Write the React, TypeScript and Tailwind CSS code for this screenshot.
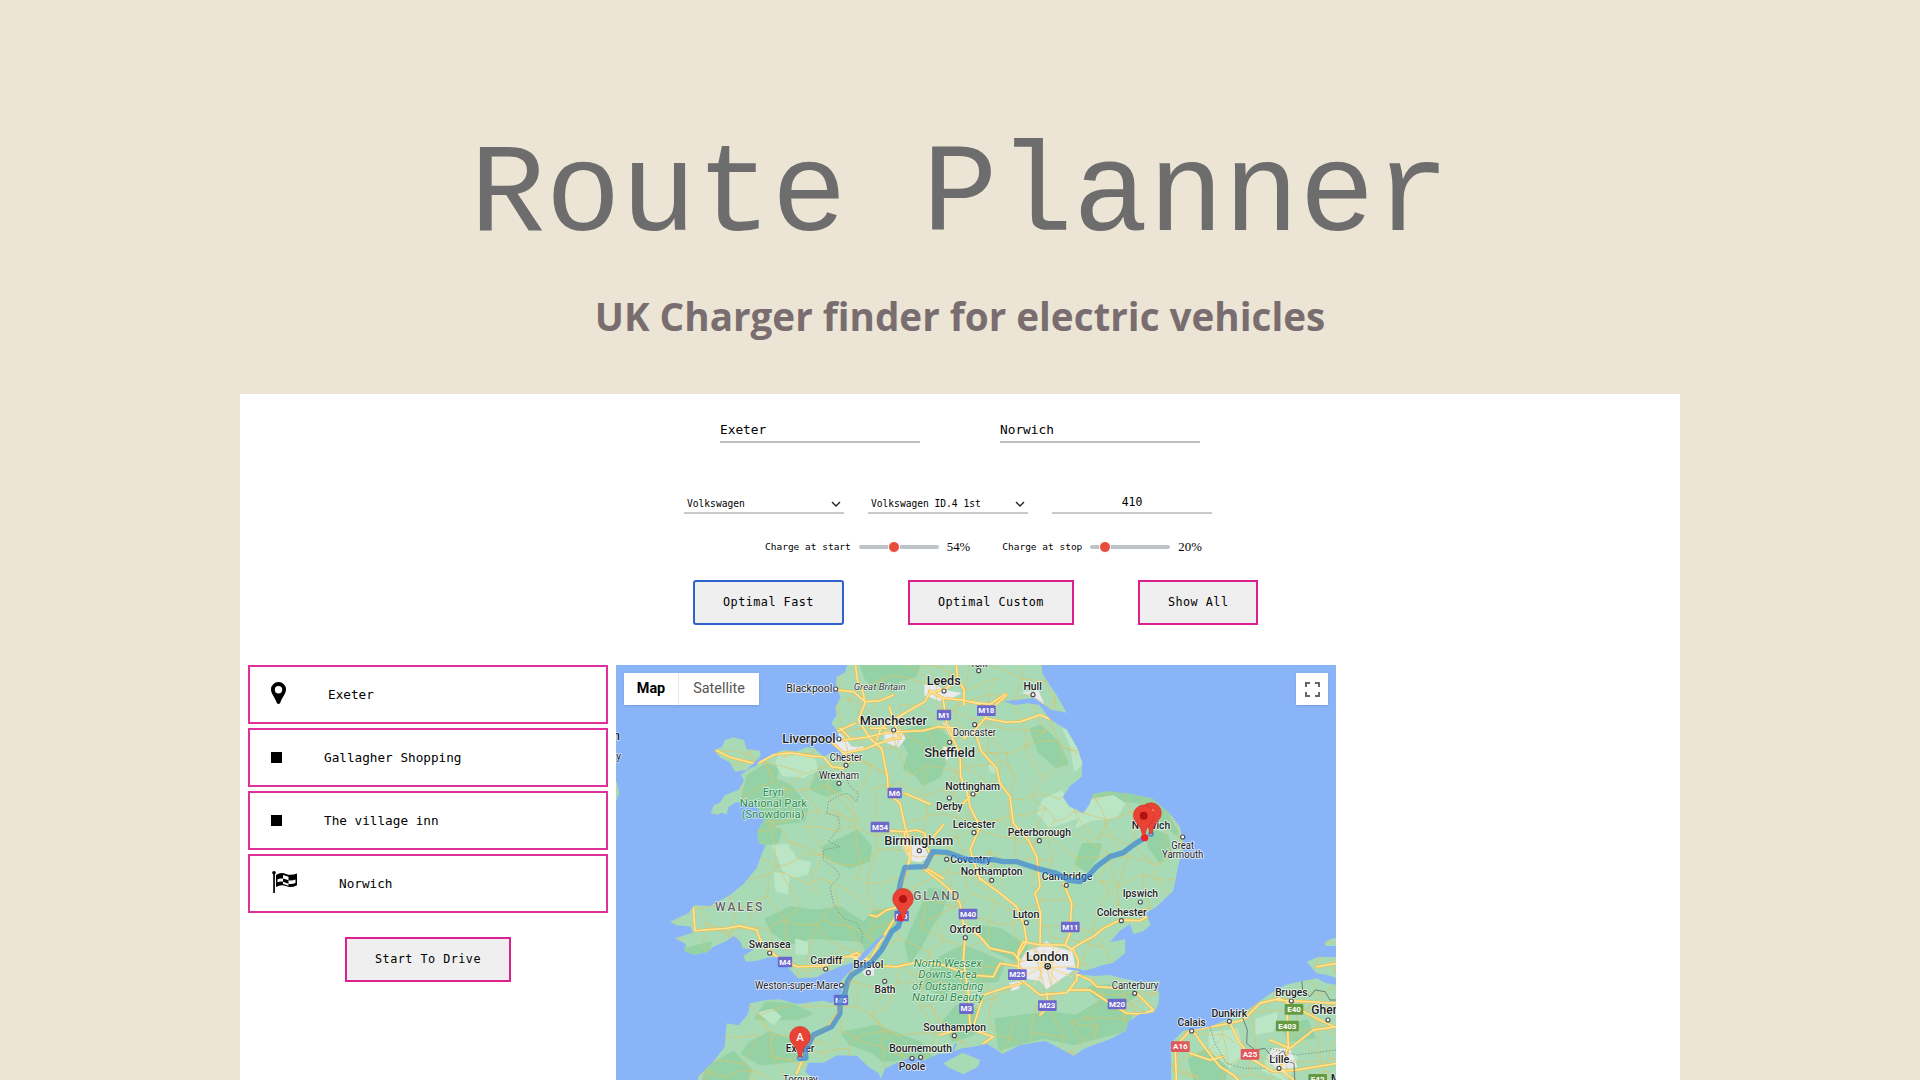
import React from "react";

const FONT_MONO = "font-['DejaVu_Sans_Mono',monospace]";

const LAND =
  "M715 0L705 38L680 50L678 82L692 112L676 142L680 165L664 190L684 216L690 240L664 236L660 250L690 272L705 296L690 300L668 275L640 290L612 264L590 262L560 274L520 270L490 282L450 302L438 318L415 328L393 345L402 362L385 390L345 405L330 428L312 436L302 460L322 464L335 458L350 464L356 440L375 428L410 425L440 440L462 480L442 515L446 548L466 556L452 590L440 625L400 672L360 705L300 738L254 736L235 760L180 785L200 796L242 800L248 818L195 835L228 852L222 872L250 884L292 876L310 860L345 845L372 828L392 845L398 865L432 868L400 888L408 905L440 902L470 894L500 890L530 918L565 955L620 952L645 938L690 920L735 905L765 872L800 838L826 824L800 852L765 895L738 920L712 942L692 965L696 995L665 1030L640 1022L560 1032L510 1018L470 1020L420 1030L414 1062L386 1096L350 1090L344 1160L310 1205L264 1250L264 1275L620 1275L610 1255L585 1235L596 1208L640 1208L682 1186L742 1188L775 1220L806 1240L812 1256L826 1225L868 1205L902 1190L945 1200L985 1182L1022 1178L1055 1165L1090 1160L1130 1152L1158 1168L1178 1182L1230 1155L1305 1143L1330 1155L1392 1187L1425 1165L1500 1138L1548 1112L1554 1085L1590 1062L1632 1058L1645 1035L1648 1000L1636 978L1652 964L1590 966L1535 955L1500 945L1450 948L1390 940L1440 928L1480 915L1508 910L1545 880L1546 838L1500 846L1530 812L1560 792L1570 822L1600 814L1622 795L1608 760L1640 740L1690 692L1704 620L1718 570L1720 545L1710 500L1675 455L1625 415L1560 402L1495 394L1450 402L1438 435L1420 460L1380 440L1358 412L1380 378L1415 350L1417 310L1402 265L1370 210L1320 178L1288 135L1255 130L1215 135L1180 124L1275 114L1320 148L1370 158L1340 105L1315 70L1297 40L1293 0Z";
const ANGLESEY = "M312 270L335 262L345 240L370 232L402 240L410 268L450 272L452 288L410 330L375 335L360 308L330 292Z";
const WIGHT = "M1000 1210L1058 1178L1110 1200L1104 1220L1060 1243L1014 1222Z";
const FRANCE =
  "M1684 1275L1682 1170L1692 1140L1720 1112L1750 1110L1800 1100L1860 1075L1920 1045L1975 1005L2025 975L2080 962L2120 955L2150 970L2185 975L2185 1275Z";
const ZEELAND = "M2090 905L2125 890L2185 892L2185 955L2150 945L2120 940ZM2146 845L2165 836L2185 832L2185 858L2146 858Z";
const WEST = "M10 352L22 370L28 400L18 425L10 430Z";
const ALL_LAND = [LAND, ANGLESEY, WIGHT, FRANCE, ZEELAND, WEST].join("");

const DARK_PATCHES = [
  "M750 0L930 0L915 45L870 60L850 90L800 86L770 55Z",
  "M890 215L930 200L975 205L1010 230L1010 290L985 350L940 370L915 340L885 325L900 280L880 240Z",
  "M415 350L470 315L500 325L495 360L540 380L590 440L580 480L500 490L460 520L445 550L440 500L470 460L400 410Z",
  "M625 330L665 345L690 390L650 405L605 385Z",
  "M445 500L510 510L500 545L460 550Z",
  "M690 540L740 515L780 560L775 600L720 620L650 590L640 565Z",
  "M1265 210L1290 200L1345 250L1370 310L1340 318L1290 275Z",
  "M470 780L540 745L620 755L690 745L760 790L750 840L680 835L600 830L540 850L490 815Z",
  "M745 810L790 760L850 745L860 800L800 830L770 870Z",
  "M960 690L1010 700L990 760L960 800L930 860L900 900L890 850L920 780Z",
  "M470 1030L540 1035L600 1060L560 1075L440 1075Z",
  "M420 1150L480 1120L560 1150L560 1200L450 1210L400 1180Z",
  "M700 1120L800 1100L930 1150L960 1190L820 1200L780 1170L720 1150Z",
  "M980 900L1060 860L1110 880L1180 910L1160 960L1050 970L1000 1000L940 980Z",
  "M1040 1040L1100 1050L1090 1120L1030 1140L1000 1090Z",
  "M1160 1080L1320 1060L1400 1070L1480 1020L1560 1070L1540 1110L1390 1150L1300 1130L1170 1165Z",
  "M1420 555L1470 555L1460 590L1430 630L1400 610Z",
  "M1450 395L1540 394L1620 415L1670 460L1700 520L1640 480L1590 425L1500 415L1450 430Z",
  "M1600 500L1670 530L1680 590L1650 600L1620 560Z",
  "M1100 800L1170 810L1250 860L1220 900L1150 870Z",
  "M1440 985L1520 975L1580 1000L1540 1030L1460 1010Z",
  "M1740 1200L1790 1170L1850 1200L1840 1275L1760 1275Z",
  "M2020 1100L2090 1085L2110 1130L2040 1140Z",
  "M225 870L300 850L290 876L240 884Z",
  "M290 1225L370 1180L420 1230L400 1275L280 1275Z",
];
const LIGHT_PATCHES = [
  "M490 560L530 555L560 600L600 610L590 640L550 650L520 630L510 600Z",
  "M510 280L560 280L610 290L620 330L580 350L520 345L500 310Z",
  "M1300 420L1355 395L1370 440L1420 465L1380 480L1320 500L1285 460Z",
  "M1440 420L1510 410L1540 430L1520 470L1440 480L1400 500L1420 460Z",
  "M1350 180L1400 250L1416 310L1395 330L1385 260Z",
  "M1140 315L1155 322L1152 335L1140 330Z",
  "M495 640L535 645L530 700L500 690Z",
  "M560 840L590 850L590 880L560 880Z",
  "M450 1060L485 1050L510 1070L490 1090Z",
  "M1940 1080L2000 1060L1990 1110L1940 1120Z",
  "M1800 1120L1880 1110L1900 1180L1860 1220L1800 1170Z",
  "M1980 1180L2060 1190L2030 1260L1960 1230Z",
  "M620 240L640 262L620 262Z",
];
const URBAN = [
  "M945 75L975 78L1020 95L1050 100L1020 115L985 120L945 105Z",
  "M825 215L870 210L885 235L865 260L825 245Z",
  "M665 215L695 225L725 262L760 262L700 285L672 245Z",
  "M1000 190L1020 200L1040 215L1020 225ZM1000 260L1030 270L1010 300Z",
  "M870 545L940 560L955 590L930 605L900 600L885 570Z",
  "M1240 97L1285 95L1300 130L1290 135L1270 110Z",
  "M1250 875L1290 862L1310 845L1330 862L1385 875L1395 925L1360 950L1310 985L1290 960L1250 955L1225 920Z",
  "M1200 970L1230 965L1225 985L1205 990Z",
  "M1990 1165L2040 1170L2060 1220L2000 1225L1975 1190Z",
  "M750 910L790 915L790 945L765 945Z",
];
const MAJOR = [
  "M735 0L742 60L760 100L765 130L745 180L780 235L815 265L832 350L835 400L870 430L885 500L900 545L900 600L880 660",
  "M680 90L730 95L765 125L810 122L850 105",
  "M1038 0L1043 55L1010 85L958 100L945 125L900 150L850 180L812 205",
  "M958 92L1000 115L1055 120L1110 132",
  "M1043 55L1062 90L1062 135",
  "M1000 120L1010 190L1030 240L1050 280L1052 350L1070 390L1080 440L1110 500L1080 570L1110 660",
  "M1060 235L1090 215L1125 175L1140 150L1190 105",
  "M700 240L770 232L830 218L870 215L940 212L985 200L1040 205",
  "M680 215L735 190M690 205L725 240",
  "M655 235L700 280L760 268L795 255L850 235L870 235",
  "M320 272L360 292L440 312L490 285L540 278L600 288L640 290L665 320L700 325L720 300L690 270L665 245",
  "M838 140L850 180L870 235",
  "M782 205L830 205M812 205L800 240",
  "M1080 125L1140 133L1185 102",
  "M1125 175L1190 187L1230 185L1290 165L1320 177",
  "M1100 230L1115 275L1160 325L1170 370L1200 410L1210 490L1255 540L1280 590L1290 680L1275 700L1292 760L1290 850",
  "M840 512L885 515L920 510L945 520L950 560L965 590L940 625L985 660L1020 690L1050 730L1060 790L1110 830L1140 865L1210 880L1230 900",
  "M885 515L880 550L900 590L890 625L865 690L870 750L820 830L780 900L725 940L690 1050L655 1100L605 1130L575 1205L560 1240",
  "M945 560L1000 495M885 400L960 432",
  "M950 625L1000 655M780 765L800 770L830 750L860 742",
  "M1060 430L1080 410L1110 390",
  "M1110 655L1170 700L1220 740L1242 795L1250 845L1220 895",
  "M1360 670L1385 730L1380 820L1365 855L1290 855L1240 845L1225 875L1225 930L1240 965L1290 1005L1370 998L1400 960L1405 900L1390 870L1365 855",
  "M1380 870L1420 845L1450 830L1480 805L1530 780L1590 782L1620 765",
  "M1395 940L1440 960L1460 980L1530 985",
  "M1375 990L1440 990L1500 1030L1550 1060L1600 1062L1630 1050L1580 1000",
  "M1310 1000L1315 1040L1290 1065",
  "M1235 970L1180 985L1120 1005L1090 1100L1040 1110L990 1125M1090 1110L1150 1130L1120 1150",
  "M1230 920L1170 910L1150 950L1080 945L1000 915L930 905L860 920L800 918L770 895L735 890L700 890",
  "M250 740L255 812L350 805L390 798L440 810L455 850L500 890L560 920L640 918L700 900",
  "M770 900L740 878L720 888L760 905",
  "M1065 835L1060 900L1075 1000L1080 1100",
  "M1700 1275L1695 1160L1740 1112L1860 1090L1900 1080L1950 1030L2010 1015L2090 1060L2170 1100",
  "M1750 1115L1790 1170L1830 1220L1870 1245L1900 1275",
  "M1860 1090L1890 1150L1930 1200L1990 1235L2060 1230L2180 1210",
  "M2030 1020L2035 1160L2010 1225L2070 1275",
  "M2180 1100L2110 1110L2040 1165L1980 1140M2000 1020L2180 1030",
  "M1740 1180L1800 1200L1840 1190M2120 920L2180 910",
].join("");
const ROUTE =
  "M862 720L872 665L885 622L945 620L968 575L1010 577L1060 595L1120 605L1145 598L1180 605L1220 605L1280 625L1340 640L1375 660L1410 665L1440 642L1460 620L1500 590L1540 578L1570 555L1604 533" +
  "M862 720L875 770L865 800L845 815L815 870L785 905L760 922L725 945L712 965L705 1000L690 1020L690 1060L665 1100L610 1125L600 1145L585 1170L588 1194L572 1196";

type City = { n: string; x: number; y: number; s: number; dot?: [number, number]; w?: number };
const CITIES: City[] = [
  { n: "Blackpool", x: 598, y: 97, s: 30, dot: [677, 87], w: 138 },
  { n: "Leeds", x: 1001, y: 76, s: 38, dot: [1002, 93], w: 102 },
  { n: "Manchester", x: 850, y: 194, s: 38, dot: [851, 210], w: 202 },
  { n: "Liverpool", x: 597, y: 250, s: 38, dot: [687, 237], w: 160 },
  { n: "Chester", x: 708, y: 303, s: 30, dot: [708, 316], w: 97 },
  { n: "Wrexham", x: 687, y: 356, s: 30, dot: [687, 370], w: 120 },
  { n: "Sheffield", x: 1019, y: 291, s: 38, dot: [1019, 247], w: 152 },
  { n: "Doncaster", x: 1093, y: 229, s: 30, dot: [1094, 194], w: 130 },
  { n: "Hull", x: 1268, y: 91, s: 33, dot: [1269, 104], w: 55 },
  { n: "Nottingham", x: 1088, y: 389, s: 31, dot: [1089, 402], w: 164 },
  { n: "Derby", x: 1018, y: 450, s: 31, dot: [1018, 414], w: 80 },
  { n: "Leicester", x: 1092, y: 504, s: 31, dot: [1092, 518], w: 128 },
  { n: "Birmingham", x: 926, y: 555, s: 38, dot: [928, 572], w: 207 },
  { n: "Peterborough", x: 1288, y: 528, s: 31, dot: [1288, 542], w: 190 },
  { n: "Norwich", x: 1623, y: 506, s: 31, w: 115 },
  { n: "Great", x: 1718, y: 566, s: 30, dot: [1718, 531], w: 68 },
  { n: "Yarmouth", x: 1718, y: 594, s: 30, w: 124 },
  { n: "Northampton", x: 1145, y: 646, s: 31, dot: [1145, 661], w: 186 },
  { n: "Cambridge", x: 1371, y: 661, s: 31, dot: [1369, 676], w: 152 },
  { n: "Ipswich", x: 1591, y: 711, s: 31, dot: [1591, 726], w: 106 },
  { n: "Colchester", x: 1535, y: 768, s: 31, dot: [1534, 782], w: 150 },
  { n: "Luton", x: 1248, y: 774, s: 31, dot: [1249, 788], w: 80 },
  { n: "Oxford", x: 1066, y: 819, s: 31, dot: [1066, 833], w: 95 },
  { n: "London", x: 1312, y: 902, s: 39, w: 128 },
  { n: "Canterbury", x: 1575, y: 986, s: 30, dot: [1574, 1000], w: 140 },
  { n: "Swansea", x: 479, y: 865, s: 31, dot: [479, 879], w: 125 },
  { n: "Cardiff", x: 649, y: 912, s: 31, dot: [647, 927], w: 96 },
  { n: "Bristol", x: 775, y: 923, s: 31, dot: [775, 938], w: 90 },
  { n: "Bath", x: 825, y: 1000, s: 31, dot: [824, 964], w: 63 },
  { n: "Weston-super-Mare", x: 560, y: 986, s: 30, dot: [694, 976], w: 250 },
  { n: "Exeter", x: 570, y: 1177, s: 31, w: 86 },
  { n: "Torquay", x: 571, y: 1268, s: 30, w: 104 },
  { n: "Bournemouth", x: 932, y: 1177, s: 31, dot: [932, 1192], w: 188 },
  { n: "Poole", x: 906, y: 1230, s: 31, dot: [906, 1195], w: 80 },
  { n: "Southampton", x: 1034, y: 1112, s: 31, dot: [1033, 1127], w: 188 },
  { n: "Bruges", x: 2044, y: 1008, s: 31, dot: [2044, 1023], w: 97 },
  { n: "Dunkirk", x: 1858, y: 1070, s: 31, dot: [1858, 1084], w: 107 },
  { n: "Calais", x: 1745, y: 1098, s: 31, dot: [1745, 1113], w: 85 },
  { n: "Ghent", x: 2152, y: 1062, s: 38, dot: [2154, 1080], w: 96 },
  { n: "Lille", x: 2008, y: 1210, s: 33, dot: [2007, 1225], w: 60 },
];
const SHIELDS: [string, number, number, string][] = [
  ["M1", 1002, 165, "#6c68cc"],
  ["M18", 1129, 152, "#6c68cc"],
  ["M6", 854, 399, "#6c68cc"],
  ["M54", 810, 501, "#6c68cc"],
  ["M40", 1074, 762, "#6c68cc"],
  ["M11", 1381, 801, "#6c68cc"],
  ["M4", 525, 906, "#6c68cc"],
  ["M25", 1222, 944, "#6c68cc"],
  ["M3", 1069, 1046, "#6c68cc"],
  ["M23", 1312, 1037, "#6c68cc"],
  ["M20", 1521, 1032, "#6c68cc"],
  ["M5", 875, 768, "#6c68cc"],
  ["M5", 693, 1020, "#6c68cc"],
  ["A16", 1711, 1160, "#e0575c"],
  ["A25", 1920, 1183, "#e0575c"],
  ["E40", 2052, 1048, "#669a41"],
  ["E403", 2032, 1098, "#669a41"],
  ["E42", 2123, 1258, "#669a41"],
];

function minorRoads() {
  let seed = 11;
  const rnd = () => (seed = (seed * 16807) % 2147483647) / 2147483647;
  const step = 66;
  const cols = 35;
  const rows = 21;
  const pts = Array.from({ length: rows }, (_, r) =>
    Array.from({ length: cols }, (_, c) => [
      c * step + (r % 2) * 30 + (rnd() - 0.5) * 58,
      r * step + (rnd() - 0.5) * 58,
    ]),
  );
  let d = "";
  const link = (a: number[], b: number[]) => {
    const mx = (a[0] + b[0]) / 2 + (rnd() - 0.5) * 34;
    const my = (a[1] + b[1]) / 2 + (rnd() - 0.5) * 34;
    d += `M${a[0].toFixed(0)} ${a[1].toFixed(0)}Q${mx.toFixed(0)} ${my.toFixed(0)} ${b[0].toFixed(0)} ${b[1].toFixed(0)}`;
  };
  for (let r = 0; r < rows - 1; r++)
    for (let c = 0; c < cols - 1; c++) {
      if (rnd() < 0.68) link(pts[r][c], pts[r][c + 1]);
      if (rnd() < 0.68) link(pts[r][c], pts[r + 1][c]);
      if (rnd() < 0.25) link(pts[r][c], pts[r + 1][c + 1]);
    }
  return d;
}
const MINOR = minorRoads();

function Pin({ x, y, children }: { x: number; y: number; children?: React.ReactNode }) {
  return (
    <g transform={`translate(${x} ${y})`}>
      <path
        d="M0 6C-4 6 -4 2 -5 -3C-8 -18 -14 -26 -22 -35A31 31 0 1 1 22 -35C14 -26 8 -18 5 -3C4 2 4 6 0 6Z"
        fill="#ea4335"
        stroke="#c5221f"
        strokeWidth="1.5"
      />
      {children}
    </g>
  );
}

function MapCanvas() {
  return (
    <svg viewBox="18 15 2160 1245" className="block h-full w-full" fontFamily="Roboto, sans-serif">
      <defs>
        <clipPath id="land">
          <path d={ALL_LAND} />
        </clipPath>
      </defs>
      <rect x="0" y="0" width="2200" height="1300" fill="#8ab4f8" />
      <path d={ALL_LAND} fill="#a8dab5" />
      <g clipPath="url(#land)" strokeLinejoin="round">
        <path d={DARK_PATCHES.join("")} fill="#94d2a5" stroke="#94d2a5" strokeWidth="12" />
        <path d={LIGHT_PATCHES.join("")} fill="#bbe6c6" stroke="#bbe6c6" strokeWidth="8" />
        <path d={URBAN.join("")} fill="#e8eaed" stroke="#e8eaed" strokeWidth="4" />
        <path d={MINOR} fill="none" stroke="#dcc56c" strokeWidth="2.4" opacity=".9" />
        <path
          d="M1300 870L1290 960M1330 860L1325 975M1230 925L1400 920M1245 890L1385 950M1240 950L1380 880M1275 870L1345 970M1350 865L1270 975"
          fill="none"
          stroke="#fbd67c"
          strokeWidth="3"
        />
        <g fill="none" strokeLinecap="round">
          <path d={MAJOR} stroke="#f3bd45" strokeWidth="8.5" />
          <path d={MAJOR} stroke="#ffe69b" strokeWidth="4.5" />
        </g>
        <path
          d="M700 335L720 380L745 400L740 425L715 400L690 405L655 425L650 460L685 470L690 500L655 545L690 560L640 570L640 600L680 630L690 650L660 680L670 730L700 775L740 790L758 820L755 850M1800 1100L1815 1150L1850 1210L1900 1225L1965 1225M1980 1165L2060 1185L2180 1170"
          fill="none"
          stroke="#7d9a86"
          strokeWidth="3"
          strokeDasharray="4 5"
        />
        <path
          d="M1897 1070L1912 1110L1910 1150L1935 1170L1965 1165L1990 1195L2020 1172L2035 1205L2052 1210L2055 1275M2075 960L2078 988L2100 1010L2115 990L2145 995L2160 1020L2185 1020"
          fill="none"
          stroke="#6d7f76"
          strokeWidth="3"
        />
      </g>
      <path d="M1370 925L1400 928L1420 935M1290 135L1320 152" fill="none" stroke="#8ab4f8" strokeWidth="7" />
      <path d="M1038 1150L1025 1180M820 826L795 850" fill="none" stroke="#8ab4f8" strokeWidth="6" />

      {SHIELDS.map(([t, x, y, c]) => (
        <g key={t + x}>
          <rect x={x - (t.length * 13 + 17) / 2} y={y - 16} width={t.length * 13 + 17} height="32" rx="3" fill={c} />
          <text x={x} y={y + 8} fontSize="24" fontWeight="700" textAnchor="middle" fill="#fff">
            {t}
          </text>
        </g>
      ))}
      {CITIES.map((c) => (
        <g key={c.n}>
          {c.dot && <circle cx={c.dot[0]} cy={c.dot[1]} r="6" fill="#fff" stroke="#494d50" strokeWidth="3.5" />}
          <text
            x={c.x}
            y={c.y}
            fontSize={c.s}
            textAnchor="middle"
            textLength={c.w}
            lengthAdjust="spacingAndGlyphs"
            fontWeight={c.s > 30 ? 500 : 400}
            fill="#202124"
            stroke="#fff"
            strokeOpacity=".8"
            strokeWidth="5"
            strokeLinejoin="round"
            paintOrder="stroke"
          >
            {c.n}
          </text>
        </g>
      ))}
      <text
        x="1021"
        y="608"
        fontSize="31"
        fontWeight="500"
        textLength="123"
        lengthAdjust="spacingAndGlyphs"
        fill="#202124"
        stroke="#fff"
        strokeOpacity=".8"
        strokeWidth="5"
        paintOrder="stroke"
      >
        Coventry
      </text>
      <g fill="none" strokeLinejoin="round" strokeLinecap="round">
        <path d={ROUTE} stroke="#2f86dc" strokeWidth="16" opacity=".68" />
        <path d={ROUTE} stroke="#7b93c0" strokeWidth="5" opacity=".4" />
      </g>
      <circle cx="1010" cy="598" r="6" fill="#fff" stroke="#494d50" strokeWidth="3.5" />
      <circle cx="1313" cy="919" r="8" fill="#fff" stroke="#202124" strokeWidth="4" />
      <circle cx="1313" cy="919" r="3.5" fill="#202124" />
      <g textAnchor="middle" stroke="#fff" strokeOpacity=".7" strokeWidth="4" paintOrder="stroke" strokeLinejoin="round">
        <text x="809" y="90" fontSize="29" fontStyle="italic" fill="#3c4043" textLength="156" lengthAdjust="spacingAndGlyphs">
          Great Britain
        </text>
        <g fill="#238a4b" fontSize="33">
          <text x="490" y="408" textLength="64" lengthAdjust="spacingAndGlyphs">Eryri</text>
          <text x="490" y="441" textLength="202" lengthAdjust="spacingAndGlyphs">National Park</text>
          <text x="489" y="475" textLength="188" lengthAdjust="spacingAndGlyphs">(Snowdonia)</text>
        </g>
        <g fill="#238a4b" fontSize="34" fontStyle="italic">
          <text x="1013" y="921" textLength="204" lengthAdjust="spacingAndGlyphs">North Wessex</text>
          <text x="1013" y="955" textLength="176" lengthAdjust="spacingAndGlyphs">Downs Area</text>
          <text x="1013" y="989" textLength="214" lengthAdjust="spacingAndGlyphs">of Outstanding</text>
          <text x="1013" y="1022" textLength="214" lengthAdjust="spacingAndGlyphs">Natural Beauty</text>
        </g>
        <g fill="#5f6368" fontSize="36" fontWeight="500">
          <text x="386" y="752" textLength="142">WALES</text>
          <text x="979" y="720" textLength="138">GLAND</text>
        </g>
        <text x="20" y="240" fontSize="36" fontWeight="500" fill="#202124">n</text>
        <text x="26" y="300" fontSize="30" fill="#202124">y</text>
        <text x="1106" y="20" fontSize="30" fill="#202124" textLength="54">York</text>
        <text x="2178" y="1270" fontSize="36" fontWeight="500" fill="#202124">M</text>
      </g>
      <circle cx="1106" cy="32" r="6" fill="#fff" stroke="#494d50" strokeWidth="3.5" />

      <circle cx="1623" cy="522" r="6" fill="#9ec7f5" stroke="#3b82d6" strokeWidth="4" />
      <Pin x={1623} y={516}>
        <text y="-44" fontSize="31" fontWeight="500" textAnchor="middle" fill="#fff">B</text>
      </Pin>
      <circle cx="1604" cy="533" r="11" fill="#f0202c" />
      <Pin x={1601} y={523}>
        <circle cy="-56" r="12" fill="#b31412" />
      </Pin>
      <circle cx="872" cy="773" r="11" fill="#f0202c" />
      <Pin x={879} y={773}>
        <circle cy="-56" r="12" fill="#b31412" />
      </Pin>
      <circle cx="570" cy="1193" r="7" fill="#9ec7f5" stroke="#3b82d6" strokeWidth="4" />
      <Pin x={570} y={1187}>
        <text y="-44" fontSize="34" fontWeight="500" textAnchor="middle" fill="#fff">A</text>
      </Pin>
    </svg>
  );
}

function Chevron() {
  return (
    <svg viewBox="0 0 10 10" className="h-2.5 w-2.5" fill="none" stroke="#222" strokeWidth="1.4">
      <path d="M1 3L5 7L9 3" />
    </svg>
  );
}

function Select({ value }: { value: string }) {
  return (
    <div className="flex h-6 w-40 items-center justify-between border-b-2 border-[#cacaca] px-[3px] pt-[5px] text-[9.6px] leading-3">
      {value}
      <Chevron />
    </div>
  );
}

function Slider({ label, value, at }: { label: string; value: string; at: number }) {
  return (
    <div className="flex h-5 items-center">
      <span className="text-[9.5px] leading-5">{label}</span>
      <div className="relative ml-2 h-1 w-20 rounded-full bg-[#bdc3c7]">
        <div className="absolute -top-[4px] h-3 w-3 rounded-full border border-white bg-[#e74c3c]" style={{ left: at }} />
      </div>
      <span className="ml-2 font-['Liberation_Serif',serif] text-[12.8px] leading-5">{value}</span>
    </div>
  );
}

function ActionButton({ label, focus }: { label: string; focus?: boolean }) {
  return (
    <button
      className={`h-[45px] border-2 bg-[#efefef] px-7 text-[11.8px] tracking-[0.47px] whitespace-nowrap text-black ${
        focus ? "rounded-[3px] border-[#2f62cc]" : "border-[#dc2090]"
      }`}
    >
      {label}
    </button>
  );
}

function StopRow({ icon, gap, label }: { icon: React.ReactNode; gap: string; label: string }) {
  return (
    <li className="flex h-[59px] items-center border-2 border-[#e0309a] pl-[21px] text-[12.7px]">
      {icon}
      <span className={gap}>{label}</span>
    </li>
  );
}

export default function App() {
  return (
    <div className="flex h-[1080px] w-[1920px] flex-col items-center overflow-hidden bg-[#ece5d5]">
      <header className="flex h-[394px] shrink-0 flex-col items-center whitespace-nowrap">
        <h1 className="mt-[126px] font-['Liberation_Mono',monospace] text-[125.6px] leading-[142px] text-[#6d6d6d]">Route Planner</h1>
        <p className="mt-5 font-['Open_Sans',sans-serif] text-[38.65px] leading-[56px] font-bold text-[#7a6d70]">
          UK Charger finder for electric vehicles
        </p>
      </header>

      <main className={`flex w-[1440px] flex-1 flex-col bg-white text-black ${FONT_MONO}`}>
        <div className="ml-[480px] flex gap-20 pt-[26px]">
          <div className="h-[23px] w-[200px] border-b-2 border-[#bdbdbd] text-[12.8px] leading-5">Exeter</div>
          <div className="h-[23px] w-[200px] border-b-2 border-[#bdbdbd] text-[12.8px] leading-5">Norwich</div>
        </div>
        <div className="mt-[47px] ml-[444px] flex gap-6">
          <Select value="Volkswagen" />
          <Select value="Volkswagen ID.4 1st" />
          <div className="h-6 w-40 border-b-2 border-[#cacaca] pt-[2px] text-center text-[11.4px] leading-5">410</div>
        </div>
        <div className="mt-[23px] ml-[525px] flex gap-8">
          <Slider label="Charge at start" value="54%" at={29} />
          <Slider label="Charge at stop" value="20%" at={9} />
        </div>
        <div className="mt-[23px] ml-[453px] flex gap-16">
          <ActionButton label="Optimal Fast" focus />
          <ActionButton label="Optimal Custom" />
          <ActionButton label="Show All" />
        </div>

        <div className="mt-10 flex">
          <aside className="ml-2 flex w-[360px] flex-col items-center">
            <ul className="flex w-full flex-col gap-1">
              <StopRow
                gap="ml-[42px]"
                label="Exeter"
                icon={
                  <svg viewBox="0 0 15 22" className="-mt-1 h-[22px] w-[15px]">
                    <path
                      d="M7.5 0A7.4 7.4 0 0 0 0 7.5C0 12 3.6 14.5 5.8 21Q7.5 23 9.2 21C11.4 14.5 15 12 15 7.5A7.4 7.4 0 0 0 7.5 0ZM7.5 4A3.7 3.7 0 1 1 7.5 11.4A3.7 3.7 0 0 1 7.5 4Z"
                      fillRule="evenodd"
                    />
                  </svg>
                }
              />
              <StopRow gap="ml-[42px]" label="Gallagher Shopping" icon={<span className="h-[11px] w-[11px] bg-black" />} />
              <StopRow gap="ml-[42px]" label="The village inn" icon={<span className="h-[11px] w-[11px] bg-black" />} />
              <StopRow
                gap="ml-[41px]"
                label="Norwich"
                icon={
                  <svg viewBox="0 0 26 22" className="-mt-1 ml-px h-[22px] w-[26px]">
                    <circle cx="2" cy="1.8" r="1.8" />
                    <path d="M1.2 2h1.7v20h-1.7z" />
                    <path
                      fillRule="evenodd"
                      d="M4 4Q9 .8 14 3Q19 5 25 2.400V14.2Q19 17.500 14 15Q9 13 4 16ZM11 4V7.600Q13.500 8 16.500 9.300V5.800Q13.500 4.800 11 4ZM5.500 8.400V11.400Q8 10 11 10.800V7.600Q8 7 5.500 8.400ZM16.500 9.300V12.800Q20 13.400 23.500 12V8.600Q20 10 16.500 9.300ZM11 10.800V12.900Q13 13 15 14.200Q16 14.600 16.500 14.500V12.800Q13.500 11.600 11 10.800Z"
                    />
                  </svg>
                }
              />
            </ul>
            <div className="mt-6">
              <ActionButton label="Start To Drive" />
            </div>
          </aside>
          <section className="relative ml-2 h-[415px] w-[720px] overflow-hidden">
            <MapCanvas />
            <div className="absolute top-2 left-2 flex h-8 items-center bg-white font-['Roboto',sans-serif] text-[14.4px] shadow">
              <span className="flex h-full w-[55px] items-center justify-center border-r border-gray-200 font-bold text-black">Map</span>
              <span className="flex h-full w-20 items-center justify-center text-[#565656]">Satellite</span>
            </div>
            <div className="absolute top-2 right-2 flex h-8 w-8 items-center justify-center bg-white shadow">
              <svg viewBox="0 0 15 15" className="h-[15px] w-[15px]" fill="none" stroke="#666" strokeWidth="2">
                <path d="M1 5V1H5M10 1H14V5M14 10V14H10M5 14H1V10" />
              </svg>
            </div>
          </section>
        </div>
      </main>
    </div>
  );
}
